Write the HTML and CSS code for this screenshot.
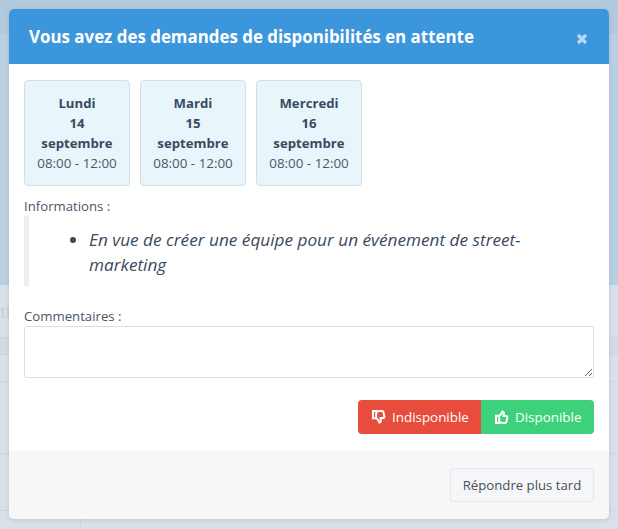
FILE: index.html
```html
<!DOCTYPE html>
<html lang="fr">
<head>
<meta charset="utf-8">
<title>Demandes de disponibilités</title>
<link rel="stylesheet" href="styles.css">
</head>
<body>
<div class="page">
  <div class="page-top"></div>
  <div class="page-hero"></div>
  <div class="page-content">
    <div class="ghost-title">ti</div>
    <div class="ghost-row ghost-band"></div>
    <div class="ghost-row ghost-r1"></div>
    <div class="ghost-row ghost-r2"></div>
    <div class="ghost-row ghost-r3"></div>
  </div>
</div>
<section class="modal">
  <header class="modal-head">
    <h1 class="modal-title">Vous avez des demandes de disponibilités en attente</h1>
    <button class="close" aria-label="Fermer">
      <svg width="12" height="12" viewBox="0 0 12 12"><path d="M2 2l8 8M10 2l-8 8" stroke="currentColor" stroke-width="3.2" fill="none"/></svg>
    </button>
  </header>
  <div class="modal-body">
    <div class="days">
      <div class="day"><strong>Lundi<br>14<br>septembre</strong><span>08:00 - 12:00</span></div>
      <div class="day"><strong>Mardi<br>15<br>septembre</strong><span>08:00 - 12:00</span></div>
      <div class="day"><strong>Mercredi<br>16<br>septembre</strong><span>08:00 - 12:00</span></div>
    </div>
    <div class="label info-label">Informations :</div>
    <blockquote class="quote">
      <ul><li>En vue de créer une équipe pour un événement de street-marketing</li></ul>
    </blockquote>
    <div class="label">Commentaires :</div>
    <textarea class="comment"></textarea>
    <div class="actions">
      <button class="btn btn-no">
        <svg class="ico" width="14" height="14" viewBox="0 0 14 14"><path d="M1 1h3.2v7.2H1zM4.2 2.2c1-.8 2-1.2 3.2-1.2h2.6c.8 0 1.3.4 1.4 1.1l1 4.6c.1.8-.4 1.4-1.2 1.4H8.6l.3 2c.1 1-.4 2.100-1.500 2.400-.4-1.600-1.300-3.200-3.200-4.400" fill="none" stroke="currentColor" stroke-width="2"/></svg>
        Indisponible
      </button>
      <button class="btn btn-yes">
        <svg class="ico" width="14" height="14" viewBox="0 0 14 14"><path d="M1 5.800h3.200V13H1zM4.200 11.800c1 .8 2 1.200 3.200 1.200h2.600c.8 0 1.300-.4 1.400-1.100l1-4.600c.1-.8-.4-1.400-1.200-1.400H8.600l.3-2c.1-1-.4-2.100-1.500-2.400-.4 1.600-1.300 3.200-3.200 4.400" fill="none" stroke="currentColor" stroke-width="2"/></svg>
        Disponible
      </button>
    </div>
  </div>
  <footer class="modal-foot">
    <button class="btn-later">Répondre plus tard</button>
  </footer>
</section>
</body>
</html>
```
FILE: styles.css
```css
* { box-sizing: border-box; }
html, body { margin: 0; height: 100%; }
body {
  position: relative;
  overflow: hidden;
  background: #d9e1e8;
  font-family: "Open Sans", "Noto Sans", sans-serif;
  font-size: 13px;
  color: #363f4d;
}
.page { position: absolute; inset: 0; display: flex; flex-direction: column; }
.page-top { height: 34px; background: #b3c9dc; }
.page-hero { height: 251px; background: #b9cfe2; }
.page-content { flex: 1; background: #d9e1e8; position: relative; }
.ghost-title { height: 52px; padding-top: 15px; font-size: 17px; line-height: 24px; color: #c3ced8; }
.ghost-row { border-top: 1px solid #ced7df; }
.ghost-band { height: 17px; background: #d2dbe3; }
.ghost-r1 { height: 27px; }
.ghost-r2 { height: 72px; }
.ghost-r3 { height: 58px; border-bottom: 1px solid #ced7df; }
.page-content::after {
  content: "";
  position: absolute;
  left: 80px;
  bottom: 0;
  width: 1px;
  height: 12px;
  background: #ced7df;
}
.modal {
  position: absolute;
  left: 9px;
  top: 9px;
  width: 600px;
  height: 510px;
  display: flex;
  flex-direction: column;
  border-radius: 5px;
  overflow: hidden;
  background: #fff;
  box-shadow: 0 1px 4px rgba(60, 80, 100, .18);
}
.modal-head {
  height: 55px;
  flex: none;
  background: #3c96dc;
  color: #fff;
  display: flex;
  align-items: center;
  justify-content: space-between;
  padding: 0 21px 0 20px;
}
.modal-title { margin: 0; font-size: 16.9px; font-weight: 700; }
.close { border: 0; padding: 0; background: none; color: #b6daf5; display: flex; margin-top: 5px; }
.modal-body { flex: 1; padding: 16px 15px 0; }
.days { display: flex; gap: 10px; }
.day {
  width: 106px;
  height: 106px;
  padding: 12px 2px 0;
  background: #e8f6fc;
  border: 1px solid #d5dee6;
  border-radius: 4px;
  text-align: center;
  line-height: 20px;
  color: #3a4a5e;
  font-size: 13.4px;
}
.day strong { display: block; font-weight: 700; font-size: 13.2px; }
.day span { display: block; color: #4a5666; }
.label { font-size: 13.2px; line-height: 20px; color: #4a5666; }
.info-label { margin-top: 10px; }
.quote {
  margin: 0 0 20px;
  height: 70px;
  border-left: 5px solid #eeeeee;
  font-style: italic;
  font-size: 17.2px;
  line-height: 25px;
  color: #3a4a5e;
}
.quote ul { margin: 0; padding: 11px 40px 0 60px; }
.comment {
  display: block;
  width: 570px;
  height: 52px;
  border: 1px solid #d8dde3;
  border-radius: 3px;
  background: #fff;
}
.actions { display: flex; justify-content: flex-end; margin-top: 22px; }
.btn {
  height: 34px;
  border: 0;
  color: #fff;
  font: 13.4px "Open Sans", "Noto Sans", sans-serif;
  display: flex;
  align-items: center;
  gap: 6px;
}
.btn-no { width: 123px; padding: 0 0 0 14px; background: #e74c3c; border-radius: 4px 0 0 4px; }
.btn-yes { width: 113px; padding: 0 0 0 14px; background: #3ed17c; border-radius: 0 4px 4px 0; }
.ico { flex: none; }
.modal-foot {
  height: 68px;
  flex: none;
  background: #f7f7f7;
  display: flex;
  justify-content: flex-end;
  align-items: center;
  padding: 0 15px;
}
.btn-later {
  width: 144px;
  height: 34px;
  padding: 0;
  background: #f5f6fa;
  border: 1px solid #e6e8ee;
  border-radius: 4px;
  color: #4a4f57;
  font: 13.2px "Open Sans", "Noto Sans", sans-serif;
}
```
